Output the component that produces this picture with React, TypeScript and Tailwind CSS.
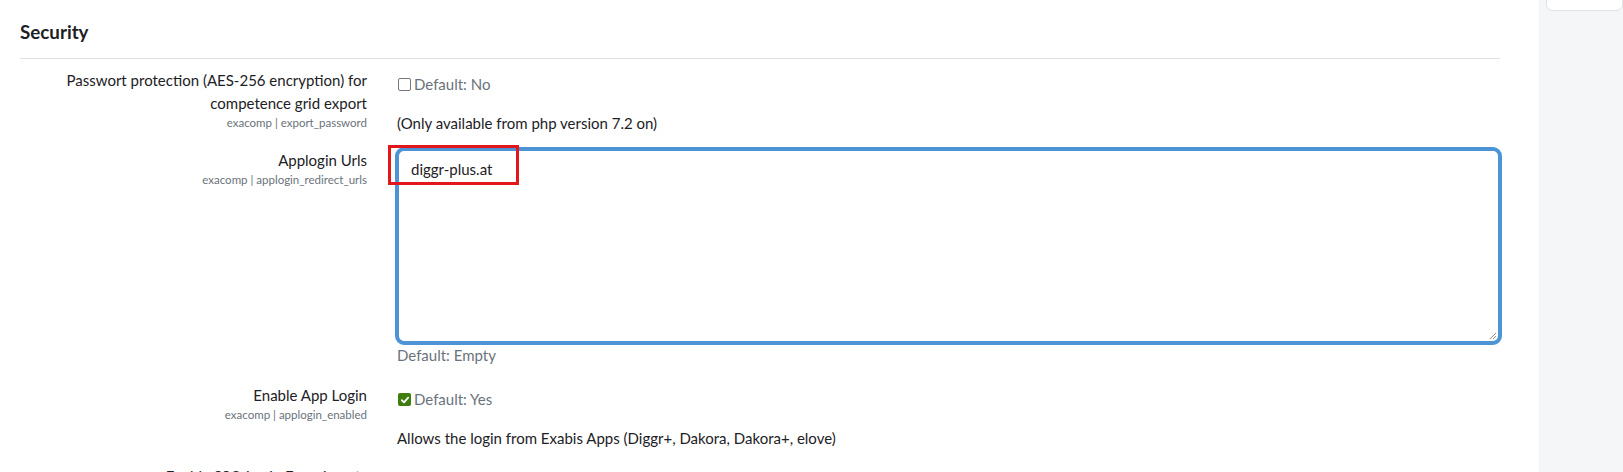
import React from "react";

const font = { fontFamily: "Lato, 'Liberation Sans', sans-serif" };

function Box({ checked }: { checked?: boolean }) {
  if (checked) {
    return (
      <span className="inline-flex h-[13px] w-[13px] items-center justify-center rounded-[2px] bg-[#3f7d0e]">
        <svg viewBox="0 0 12 12" className="h-[10px] w-[10px]">
          <path d="M2.2 6.3 L4.8 8.8 L9.8 3.2" fill="none" stroke="#fff" strokeWidth="2.2" strokeLinecap="round" strokeLinejoin="round" />
        </svg>
      </span>
    );
  }
  return <span className="inline-block h-[13px] w-[13px] rounded-[2px] border border-[#767676] bg-white" />;
}

function Label({ lines, hint }: { lines: string[]; hint: string }) {
  return (
    <div className="w-[347px] shrink-0 text-right">
      {lines.map((l) => (
        <div key={l} className="text-[15px] leading-[23px] text-[#1d2125]">
          {l}
        </div>
      ))}
      <div className="text-[11.5px] leading-[16px] text-[#6a737b]">{hint}</div>
    </div>
  );
}

export default function App() {
  return (
    <div className="flex h-[472px] w-full overflow-hidden bg-white" style={font}>
      <main className="w-[1539px] shrink-0 pl-5">
        <h3 className="mt-[21px] text-[18.75px] font-bold leading-[22px] text-[#1d2125]">Security</h3>
        <div className="mt-[15px] w-[1480px] border-t border-[#dee2e6]" />

        {/* export password */}
        <div className="mt-[10px] flex gap-[30px]">
          <Label lines={["Passwort protection (AES-256 encryption) for", "competence grid export"]} hint="exacomp | export_password" />
          <div className="pt-[4px] text-[15px] leading-[23px]">
            <div className="flex items-center gap-[3px] pl-[1px] text-[#6a737b]">
              <Box />
              <span>Default: No</span>
            </div>
            <div className="mt-[16px] text-[#1d2125]">(Only available from php version 7.2 on)</div>
          </div>
        </div>

        {/* applogin urls */}
        <div className="mt-[12px] flex gap-[28px]">
          <div className="pt-[2px]">
            <Label lines={["Applogin Urls"]} hint="exacomp | applogin_redirect_urls" />
          </div>
          <div className="relative">
            <div className="relative h-[198px] w-[1107px] rounded-[9px] border-[4px] border-[#4d94d6] bg-white">
              <div className="pl-[12px] pt-[7px] text-[15px] leading-[23px] text-[#1d2125]">diggr-plus.at</div>
              <svg viewBox="0 0 10 10" className="absolute bottom-[1px] right-[1px] h-[9px] w-[9px]">
                <path d="M9 2 L2 9 M9 5.5 L5.5 9" stroke="#777" strokeWidth="1" />
              </svg>
            </div>
            <div className="absolute left-[-7px] top-[-2px] h-[40px] w-[131px] border-[3px] border-[#e3161c]" />
            <div className="pl-[2px] text-[15px] leading-[20px] text-[#6a737b]">Default: Empty</div>
          </div>
        </div>

        {/* enable app login */}
        <div className="mt-[19px] flex gap-[30px]">
          <Label lines={["Enable App Login"]} hint="exacomp | applogin_enabled" />
          <div className="pt-[4px] text-[15px] leading-[23px]">
            <div className="flex items-center gap-[3px] pl-[1px] text-[#6a737b]">
              <Box checked />
              <span>Default: Yes</span>
            </div>
            <div className="mt-[16px] text-[#1d2125]">Allows the login from Exabis Apps (Diggr+, Dakora, Dakora+, elove)</div>
          </div>
        </div>

        <div className="mt-[15px] flex gap-[30px]">
          <Label lines={["Enable SSO Login Experiments"]} hint="exacomp | sso_enabled" />
        </div>
      </main>
      <aside className="flex-1 bg-[#f5f6f8] pl-[7px]">
        <div className="-mt-[10px] h-[21px] rounded-b-[7px] border border-[#dee2e6] bg-white" />
      </aside>
    </div>
  );
}
